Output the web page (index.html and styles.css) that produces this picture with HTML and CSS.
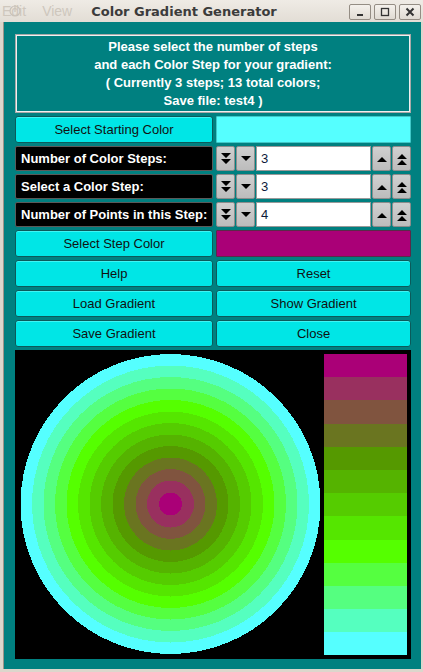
FILE: index.html
```html
<!DOCTYPE html>
<html>
<head>
<meta charset="utf-8">
<link rel="stylesheet" href="styles.css">
</head>
<body>
<div class="window">
  <div class="titlebar">
    <div class="ghost-menu"><span>Edit</span><span>View</span></div>
    <svg class="ghost-icon" width="12" height="12" viewBox="0 0 12 12"><circle cx="6" cy="6" r="5" fill="none" stroke="#c9c2b8" stroke-width="1.2"/><line x1="6" y1="0" x2="6" y2="7" stroke="#c9c2b8" stroke-width="1.2"/></svg>
    <div class="title">Color Gradient Generator</div>
    <div class="wm-buttons">
      <div class="wm-btn"><svg width="10" height="10" viewBox="0 0 10 10"><rect x="2" y="7" width="6" height="2" fill="#333"/></svg></div>
      <div class="wm-btn"><svg width="10" height="10" viewBox="0 0 10 10"><rect x="1.5" y="1.5" width="7" height="7" fill="none" stroke="#333" stroke-width="1.3"/></svg></div>
      <div class="wm-btn"><svg width="10" height="10" viewBox="0 0 10 10"><path d="M1.5 1.5 L8.5 8.5 M8.5 1.5 L1.5 8.5" stroke="#333" stroke-width="2"/></svg></div>
    </div>
  </div>
  <div class="client">
    <div class="grid">
      <div class="header">
        <div>Please select the number of steps</div>
        <div>and each Color Step for your gradient:</div>
        <div>( Currently 3 steps; 13 total colors;</div>
        <div>Save file: test4 )</div>
      </div>

      <div class="btn tall">Select Starting Color</div>
      <div class="swatch cyan"></div>

      <div class="label">Number of Color Steps:</div>
      <div class="spinner">
        <div class="sbtn"><svg width="10" height="12" viewBox="0 0 10 12"><path d="M0 0H10L5 5Z M0 6H10L5 11Z" fill="#000"/></svg></div>
        <div class="sbtn"><svg width="10" height="6" viewBox="0 0 10 6"><path d="M0 0H10L5 5Z" fill="#000"/></svg></div>
        <div class="entry">3</div>
        <div class="sbtn"><svg width="10" height="6" viewBox="0 0 10 6"><path d="M0 6H10L5 1Z" fill="#000"/></svg></div>
        <div class="sbtn"><svg width="10" height="12" viewBox="0 0 10 12"><path d="M0 6H10L5 1Z M0 12H10L5 7Z" fill="#000"/></svg></div>
      </div>

      <div class="label">Select a Color Step:</div>
      <div class="spinner">
        <div class="sbtn"><svg width="10" height="12" viewBox="0 0 10 12"><path d="M0 0H10L5 5Z M0 6H10L5 11Z" fill="#000"/></svg></div>
        <div class="sbtn"><svg width="10" height="6" viewBox="0 0 10 6"><path d="M0 0H10L5 5Z" fill="#000"/></svg></div>
        <div class="entry">3</div>
        <div class="sbtn"><svg width="10" height="6" viewBox="0 0 10 6"><path d="M0 6H10L5 1Z" fill="#000"/></svg></div>
        <div class="sbtn"><svg width="10" height="12" viewBox="0 0 10 12"><path d="M0 6H10L5 1Z M0 12H10L5 7Z" fill="#000"/></svg></div>
      </div>

      <div class="label">Number of Points in this Step:</div>
      <div class="spinner">
        <div class="sbtn"><svg width="10" height="12" viewBox="0 0 10 12"><path d="M0 0H10L5 5Z M0 6H10L5 11Z" fill="#000"/></svg></div>
        <div class="sbtn"><svg width="10" height="6" viewBox="0 0 10 6"><path d="M0 0H10L5 5Z" fill="#000"/></svg></div>
        <div class="entry">4</div>
        <div class="sbtn"><svg width="10" height="6" viewBox="0 0 10 6"><path d="M0 6H10L5 1Z" fill="#000"/></svg></div>
        <div class="sbtn"><svg width="10" height="12" viewBox="0 0 10 12"><path d="M0 6H10L5 1Z M0 12H10L5 7Z" fill="#000"/></svg></div>
      </div>

      <div class="btn">Select Step Color</div>
      <div class="swatch magenta"></div>

      <div class="btn">Help</div>
      <div class="btn">Reset</div>
      <div class="btn">Load Gradient</div>
      <div class="btn">Show Gradient</div>
      <div class="btn">Save Gradient</div>
      <div class="btn">Close</div>

      <div class="canvas">
        <svg width="396" height="309" viewBox="0 0 396 309" shape-rendering="crispEdges">
          <circle cx="155.5" cy="154" r="150" fill="#55ffff"/>
          <circle cx="155.5" cy="154" r="138.5" fill="#55ffbf"/>
          <circle cx="155.5" cy="154" r="127" fill="#55ff80"/>
          <circle cx="155.5" cy="154" r="115.5" fill="#55ff40"/>
          <circle cx="155.5" cy="154" r="104" fill="#55ff00"/>
          <circle cx="155.5" cy="154" r="92.5" fill="#55e600"/>
          <circle cx="155.5" cy="154" r="81" fill="#55cc00"/>
          <circle cx="155.5" cy="154" r="69.5" fill="#55b300"/>
          <circle cx="155.5" cy="154" r="58" fill="#559900"/>
          <circle cx="155.5" cy="154" r="46.5" fill="#6a7520"/>
          <circle cx="155.5" cy="154" r="35" fill="#80543f"/>
          <circle cx="155.5" cy="154" r="23.5" fill="#99305f"/>
          <circle cx="155.5" cy="154" r="11.5" fill="#aa0077"/>
          <rect x="309" y="4" width="83" height="23.2" fill="#aa0077"/>
          <rect x="309" y="27.2" width="83" height="23.2" fill="#99305f"/>
          <rect x="309" y="50.4" width="83" height="23.2" fill="#80543f"/>
          <rect x="309" y="73.6" width="83" height="23.2" fill="#6a7520"/>
          <rect x="309" y="96.8" width="83" height="23.2" fill="#559900"/>
          <rect x="309" y="120" width="83" height="23.2" fill="#55b300"/>
          <rect x="309" y="143.2" width="83" height="23.2" fill="#55cc00"/>
          <rect x="309" y="166.4" width="83" height="23.2" fill="#55e600"/>
          <rect x="309" y="189.6" width="83" height="23.2" fill="#55ff00"/>
          <rect x="309" y="212.8" width="83" height="23.2" fill="#55ff40"/>
          <rect x="309" y="236" width="83" height="23.2" fill="#55ff80"/>
          <rect x="309" y="259.2" width="83" height="23.2" fill="#55ffbf"/>
          <rect x="309" y="282.4" width="83" height="23" fill="#55ffff"/>
        </svg>
      </div>
    </div>
  </div>
</div>
</body>
</html>
```
FILE: styles.css
```css
html, body {
  margin: 0;
  padding: 0;
}
body {
  width: 423px;
  height: 672px;
  overflow: hidden;
  background: #dcd6cc;
  font-family: "Liberation Sans", Arial, sans-serif;
}
.window {
  display: flex;
  flex-direction: column;
  height: 672px;
}
.titlebar {
  position: relative;
  height: 22px;
  display: flex;
  align-items: center;
  background: linear-gradient(#efebe5, #e2ddd5);
  flex: none;
}
.ghost-menu {
  display: flex;
  gap: 16px;
  padding-left: 2px;
  font-size: 14px;
  color: #cec7bd;
}
.ghost-icon {
  position: absolute;
  left: 9px;
  top: 5px;
}
.title {
  margin-left: 19px;
  font-family: "DejaVu Sans", "Liberation Sans", sans-serif;
  font-size: 13px;
  font-weight: bold;
  color: #3b3b3b;
}
.wm-buttons {
  margin-left: auto;
  margin-right: 2px;
  display: flex;
  gap: 3px;
  align-self: flex-start;
  margin-top: 4px;
}
.wm-btn {
  width: 20px;
  height: 14px;
  border: 1px solid #948d84;
  border-radius: 2px;
  background: linear-gradient(#f4f1ec, #e0dbd3);
  display: flex;
  align-items: center;
  justify-content: center;
}
.client {
  flex: 1;
  margin: 0 2px 3px 3px;
  border-left: 1px solid #9b948a;
  background: #008080;
  padding: 12px 10px 10px 11px;
}
.grid {
  display: grid;
  grid-template-columns: 198px 195px;
  grid-template-rows: 79px 27px 25px 25px 25px 27px 27px 27px 27px 309px;
  gap: 3px;
}
.header {
  grid-column: 1 / 3;
  box-sizing: border-box;
  border: 1px solid #a8a8a8;
  box-shadow: inset 0 0 0 1px #f0f0f0;
  display: flex;
  flex-direction: column;
  justify-content: center;
  align-items: center;
  color: #ffffff;
  font-weight: bold;
  font-size: 13px;
  line-height: 18px;
}
.btn {
  box-sizing: border-box;
  background: #00e6e6;
  border: 1px solid #0b5a5a;
  border-radius: 3px;
  box-shadow: inset 0 1px 0 #3ff4f4;
  display: flex;
  align-items: center;
  justify-content: center;
  font-size: 13px;
  color: #111;
}
.swatch {
  box-sizing: border-box;
  border-radius: 1px;
}
.swatch.cyan {
  background: #55ffff;
  border: 1px solid #3fc8c8;
}
.swatch.magenta {
  background: #aa0077;
  border: 1px solid #5a2a48;
}
.label {
  box-sizing: border-box;
  background: #000;
  border: 1px solid #5a5a5a;
  border-radius: 2px;
  color: #fff;
  font-weight: bold;
  font-size: 13px;
  display: flex;
  align-items: center;
  padding-left: 5px;
}
.spinner {
  display: flex;
  gap: 1px;
}
.sbtn {
  box-sizing: border-box;
  width: 19px;
  flex: none;
  background: linear-gradient(#d0d0d0, #bcbcbc);
  border: 1px solid #8c8c8c;
  border-radius: 2px;
  display: flex;
  align-items: center;
  justify-content: center;
}
.entry {
  box-sizing: border-box;
  flex: 1;
  background: #fff;
  border: 1px solid #9a9a9a;
  font-size: 13px;
  color: #0c1a3a;
  display: flex;
  align-items: center;
  padding-left: 4px;
}
.canvas {
  grid-column: 1 / 3;
  background: #000;
}
.canvas svg {
  display: block;
}
```
